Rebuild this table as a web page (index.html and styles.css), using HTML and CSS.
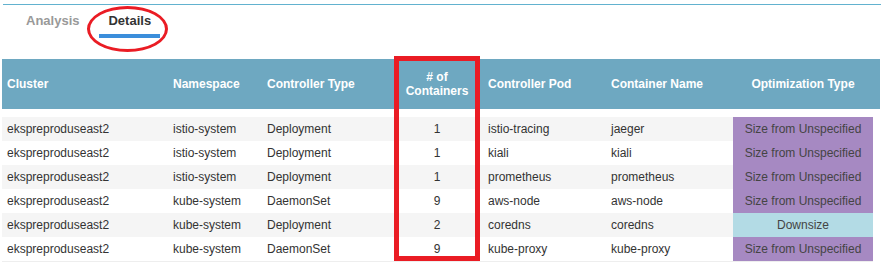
FILE: index.html
```html
<!DOCTYPE html>
<html lang="en">
<head>
    <meta charset="UTF-8">
    <meta name="viewport" content="width=device-width, initial-scale=1.0">
    <title>Container Optimization - Details</title>
    <link rel="stylesheet" href="styles.css">
</head>
<body>
    <div class="page">
        <div class="tabs">
            <span class="tab">Analysis</span>
            <span class="tab active">Details</span>
        </div>

        <table class="grid">
            <thead>
                <tr>
                    <th class="c-cluster">Cluster</th>
                    <th class="c-ns">Namespace</th>
                    <th class="c-type">Controller Type</th>
                    <th class="c-count center"># of<br>Containers</th>
                    <th class="c-pod">Controller Pod</th>
                    <th class="c-name">Container Name</th>
                    <th class="c-opt center">Optimization Type</th>
                    <th class="edge"></th>
                </tr>
            </thead>
            <tbody>
                <tr>
                    <td>ekspreproduseast2</td><td>istio-system</td><td>Deployment</td><td class="center">1</td>
                    <td>istio-tracing</td><td>jaeger</td><td class="opt size">Size from Unspecified</td><td class="edge"></td>
                </tr>
                <tr>
                    <td>ekspreproduseast2</td><td>istio-system</td><td>Deployment</td><td class="center">1</td>
                    <td>kiali</td><td>kiali</td><td class="opt size">Size from Unspecified</td><td class="edge"></td>
                </tr>
                <tr>
                    <td>ekspreproduseast2</td><td>istio-system</td><td>Deployment</td><td class="center">1</td>
                    <td>prometheus</td><td>prometheus</td><td class="opt size">Size from Unspecified</td><td class="edge"></td>
                </tr>
                <tr>
                    <td>ekspreproduseast2</td><td>kube-system</td><td>DaemonSet</td><td class="center">9</td>
                    <td>aws-node</td><td>aws-node</td><td class="opt size">Size from Unspecified</td><td class="edge"></td>
                </tr>
                <tr>
                    <td>ekspreproduseast2</td><td>kube-system</td><td>Deployment</td><td class="center">2</td>
                    <td>coredns</td><td>coredns</td><td class="opt down">Downsize</td><td class="edge"></td>
                </tr>
                <tr>
                    <td>ekspreproduseast2</td><td>kube-system</td><td>DaemonSet</td><td class="center">9</td>
                    <td>kube-proxy</td><td>kube-proxy</td><td class="opt size">Size from Unspecified</td><td class="edge"></td>
                </tr>
            </tbody>
        </table>

        <!-- red highlight marks drawn over the tab bar and the containers column -->
        <div class="mark mark-tab"></div>
        <div class="mark mark-col"></div>
    </div>
</body>
</html>
```

FILE: styles.css
```css
* { font-family: "Liberation Sans", Arial, sans-serif; }
body { margin: 0; background: #fff; }
.page { position: relative; padding: 4px 0 0 2px; }

.tabs { display: flex; gap: 11px; height: 54px; margin-left: 1px; padding-left: 14px; border-top: 1px solid #62b2cf; }
.tab { padding: 8px 9px 5px; font-size: 13px; line-height: 16px; font-weight: bold; color: #999; border-bottom: 4px solid transparent; align-self: flex-start; }
.tab.active { color: #333; border-bottom-color: #3b8edb; }

.grid { width: 878px; table-layout: fixed; border-collapse: separate; border-spacing: 0; font-size: 12px; }
.grid th, .grid td { box-sizing: border-box; }
.grid th { height: 58px; padding: 0 5px; background: #6ea8c1; color: #fff; font-weight: bold; line-height: 14px; text-align: left; border-bottom: 8px solid #fff; }
.grid td { height: 24px; padding: 0 5px; line-height: 24px; color: #333; white-space: nowrap; }

/* column widths */
.grid .c-cluster { width: 166px; }
.grid .c-ns { width: 94px; }
.grid .c-type { width: 132px; }
.grid .c-count { width: 86px; }
.grid .c-pod { width: 126px; }
.grid .c-name { width: 127px; }
.grid .c-opt { width: 140px; }
.grid th.edge { width: 7px; }

.grid th:nth-child(5), .grid td:nth-child(5) { padding-left: 8px; }
.grid tbody tr:nth-child(odd) td { background: #f5f5f5; }
.grid tbody tr:last-child td { height: 25px; border-bottom: 1px solid #eee; }
.grid .center { text-align: center; }
.grid .edge { padding: 0; }
.grid td.opt { text-align: center; color: #444; }
.grid tbody tr td.size { background: #a689c2; }
.grid tbody tr td.down { background: #b3dbe5; }
.grid tbody tr td.edge { background: #fff; border-bottom-color: #fff; }

.mark { position: absolute; border-style: solid; border-color: #ea1c24; }
.mark-tab { left: 87px; top: 6px; width: 75px; height: 40px; border-width: 3px; border-radius: 50%; }
.mark-col { left: 394px; top: 56px; width: 76px; height: 195px; border-width: 5px; }
```
